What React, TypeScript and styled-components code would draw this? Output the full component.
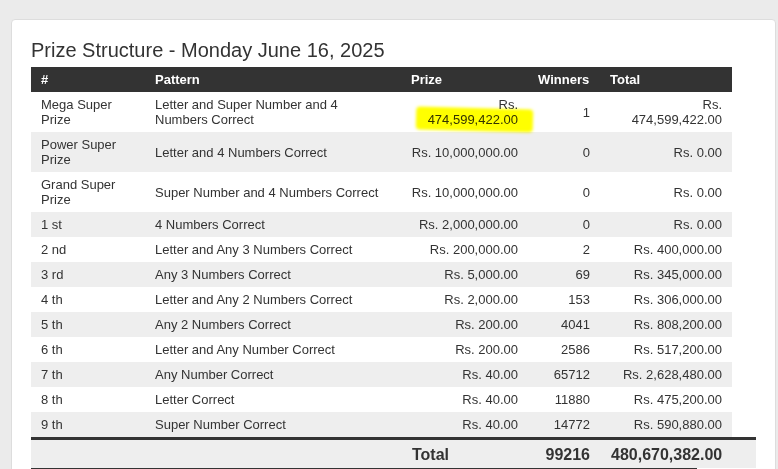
import React from "react";
import styled, { createGlobalStyle } from "styled-components";

type Prize = {
  rank: string;
  pattern: string;
  prize: string;
  winners: string;
  total: string;
};

const prizes: Prize[] = [
  { rank: "Power Super Prize", pattern: "Letter and 4 Numbers Correct", prize: "Rs. 10,000,000.00", winners: "0", total: "Rs. 0.00" },
  { rank: "Grand Super Prize", pattern: "Super Number and 4 Numbers Correct", prize: "Rs. 10,000,000.00", winners: "0", total: "Rs. 0.00" },
  { rank: "1 st", pattern: "4 Numbers Correct", prize: "Rs. 2,000,000.00", winners: "0", total: "Rs. 0.00" },
  { rank: "2 nd", pattern: "Letter and Any 3 Numbers Correct", prize: "Rs. 200,000.00", winners: "2", total: "Rs. 400,000.00" },
  { rank: "3 rd", pattern: "Any 3 Numbers Correct", prize: "Rs. 5,000.00", winners: "69", total: "Rs. 345,000.00" },
  { rank: "4 th", pattern: "Letter and Any 2 Numbers Correct", prize: "Rs. 2,000.00", winners: "153", total: "Rs. 306,000.00" },
  { rank: "5 th", pattern: "Any 2 Numbers Correct", prize: "Rs. 200.00", winners: "4041", total: "Rs. 808,200.00" },
  { rank: "6 th", pattern: "Letter and Any Number Correct", prize: "Rs. 200.00", winners: "2586", total: "Rs. 517,200.00" },
  { rank: "7 th", pattern: "Any Number Correct", prize: "Rs. 40.00", winners: "65712", total: "Rs. 2,628,480.00" },
  { rank: "8 th", pattern: "Letter Correct", prize: "Rs. 40.00", winners: "11880", total: "Rs. 475,200.00" },
  { rank: "9 th", pattern: "Super Number Correct", prize: "Rs. 40.00", winners: "14772", total: "Rs. 590,880.00" },
];

function App() {
  return (
    <>
      <GlobalStyle />
      <Page>
        <Card>
          <Title>Prize Structure - Monday June 16, 2025</Title>
          <Table>
            <colgroup>
              <col style={{ width: 114 }} />
              <col style={{ width: 256 }} />
              <col style={{ width: 127 }} />
              <col style={{ width: 72 }} />
              <col style={{ width: 132 }} />
              <col style={{ width: 24 }} />
            </colgroup>
            <thead>
              <tr>
                <HeadCell>#</HeadCell>
                <HeadCell>Pattern</HeadCell>
                <HeadCell>Prize</HeadCell>
                <HeadCell>Winners</HeadCell>
                <HeadCell>Total</HeadCell>
              </tr>
            </thead>
            <tbody>
              <Row $striped={false}>
                <Cell>Mega Super Prize</Cell>
                <Cell>Letter and Super Number and 4 Numbers Correct</Cell>
                <Cell $align="right">
                  Rs.
                  <br />
                  <Marked>474,599,422.00</Marked>
                </Cell>
                <Cell $align="right">1</Cell>
                <Cell $align="right">
                  Rs.
                  <br />
                  474,599,422.00
                </Cell>
              </Row>
              {prizes.map((p, i) => (
                <Row key={p.rank} $striped={i % 2 === 0}>
                  <Cell>{p.rank}</Cell>
                  <Cell>{p.pattern}</Cell>
                  <Cell $align="right">{p.prize}</Cell>
                  <Cell $align="right">{p.winners}</Cell>
                  <Cell $align="right">{p.total}</Cell>
                </Row>
              ))}
            </tbody>
            <tfoot>
              <tr>
                <FootCell />
                <FootCell />
                <FootCell>Total</FootCell>
                <FootCell $align="right">99216</FootCell>
                <FootCell $align="right">480,670,382.00</FootCell>
                <FootCell />
              </tr>
            </tfoot>
          </Table>
          <BottomRule />
        </Card>
      </Page>
    </>
  );
}

export default App;

const GlobalStyle = createGlobalStyle`
  html, body {
    margin: 0;
    padding: 0;
    background: #ebebeb;
    overflow: hidden;
  }
  body {
    font-family: "Liberation Sans", Arial, sans-serif;
    color: #333333;
  }
`;

const Page = styled.div`
  padding: 19px 2px 0 11px;
  height: 469px;
  box-sizing: border-box;
`;

const Card = styled.section`
  background: #ffffff;
  border: 1px solid #dddddd;
  border-radius: 4px;
  padding: 19px 19px 40px 19px;
  box-sizing: border-box;
`;

const Title = styled.h1`
  margin: 0 0 6px 0;
  font-size: 20px;
  line-height: 22px;
  font-weight: 400;
  color: #333333;
`;

const Table = styled.table`
  width: 725px;
  table-layout: fixed;
  border-collapse: collapse;
  border-spacing: 0;
  font-size: 13px;
  line-height: 15px;
`;

const HeadCell = styled.th`
  background: #333333;
  color: #ffffff;
  font-weight: 700;
  text-align: left;
  padding: 5px 10px;
  height: 15px;
`;

const Row = styled.tr<{ $striped: boolean }>`
  td {
    background: ${(p) => (p.$striped ? "#eeeeee" : "#ffffff")};
  }
`;

const Cell = styled.td<{ $align?: "left" | "right" }>`
  padding: 5px 10px;
  vertical-align: middle;
  text-align: ${(p) => p.$align ?? "left"};
  color: #333333;
`;

const FootCell = styled.td<{ $align?: "left" | "right" }>`
  background: #eeeeee;
  border-top: 3px solid #333333;
  padding: 5px 10px 5px 11px;
  height: 18px;
  font-size: 16px;
  line-height: 17px;
  font-weight: 700;
  text-align: ${(p) => p.$align ?? "left"};
  color: #333333;
`;

const Marked = styled.span`
  position: relative;
  display: inline-block;

  &::before {
    content: "";
    position: absolute;
    left: -12px;
    right: -15px;
    top: -4px;
    bottom: -4px;
    background: #ffff00;
    border-radius: 4px;
    filter: blur(1.5px);
    transform: rotate(1.5deg);
    mix-blend-mode: multiply;
    pointer-events: none;
  }
`;

const BottomRule = styled.div`
  width: 666px;
  height: 2px;
  background: #333333;
`;
